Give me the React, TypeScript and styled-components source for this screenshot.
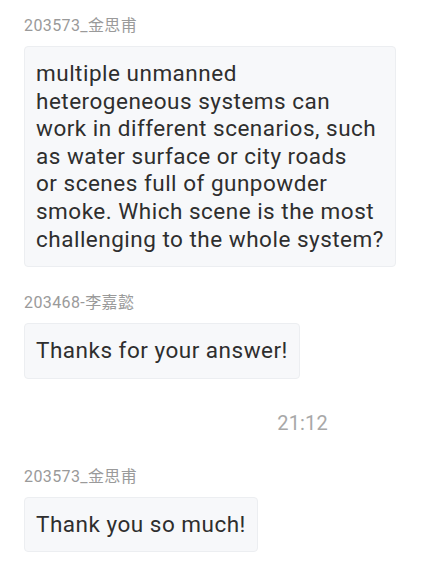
import React from "react";
import styled, { createGlobalStyle } from "styled-components";

const GlobalStyle = createGlobalStyle`
  html, body {
    margin: 0;
    padding: 0;
    background: #ffffff;
  }
  body {
    font-family: Roboto, "Noto Sans CJK SC", sans-serif;
  }
`;

const Page = styled.div`
  display: flex;
  flex-direction: column;
  padding: 15px 24px 0 24px;
`;

const Message = styled.div<{ $gapAfter: number }>`
  display: flex;
  flex-direction: column;
  align-items: flex-start;
  margin-bottom: ${(p) => p.$gapAfter}px;
`;

const Sender = styled.div`
  font-size: 16px;
  line-height: 22px;
  letter-spacing: 0.4px;
  color: #9a9a9a;
  margin-bottom: 9px;
  font-family: Roboto, "Noto Sans CJK SC", sans-serif;
`;

const Bubble = styled.div`
  box-sizing: border-box;
  max-width: 373px;
  background: #f7f8fa;
  border: 1px solid #eceef1;
  border-radius: 4px;
  padding: 13px 11px;
  font-size: 22.5px;
  line-height: 27.6px;
  letter-spacing: 0.5px;
  color: #2e2e2e;
`;

const TimeRow = styled.div`
  display: flex;
  justify-content: flex-end;
  padding-right: 82px;
  font-size: 20px;
  line-height: 28px;
  letter-spacing: 0.2px;
  color: #a8a8a8;
  margin-bottom: 29px;
`;

export default function App() {
  return (
    <>
      <GlobalStyle />
      <Page>
        <Message $gapAfter={25}>
          <Sender>203573_金思甫</Sender>
          <Bubble>
            multiple unmanned
            <br />
            heterogeneous systems can
            <br />
            work in different scenarios, such
            <br />
            as water surface or city roads
            <br />
            or scenes full of gunpowder
            <br />
            smoke. Which scene is the most
            <br />
            challenging to the whole system?
          </Bubble>
        </Message>
        <Message $gapAfter={30}>
          <Sender>203468-李嘉懿</Sender>
          <Bubble>Thanks for your answer!</Bubble>
        </Message>
        <TimeRow>21:12</TimeRow>
        <Message $gapAfter={0}>
          <Sender>203573_金思甫</Sender>
          <Bubble>Thank you so much!</Bubble>
        </Message>
      </Page>
    </>
  );
}
